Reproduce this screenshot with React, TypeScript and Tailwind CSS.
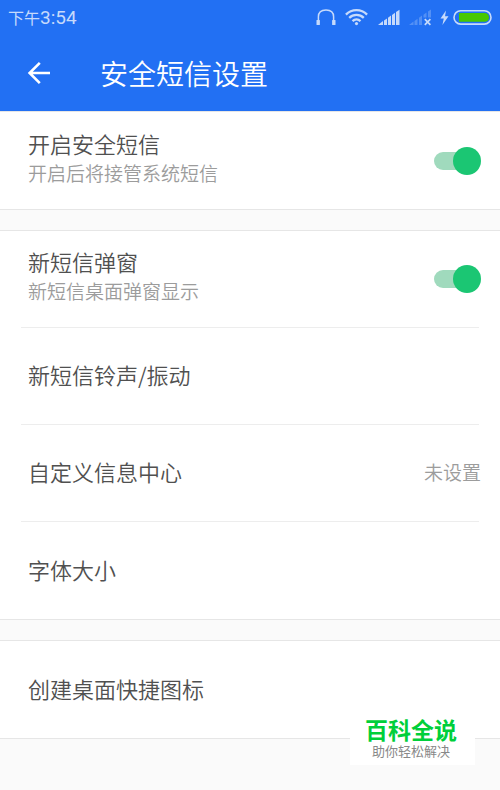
import { useState } from "react";
import type { ReactNode } from "react";

function StatusBar() {
  return (
    <div className="flex h-9 items-center justify-between pl-2 pr-[7px] text-[#c6dafb]">
      <div className="flex items-baseline pb-0.5 leading-5">
        <span className="text-[16px]">下午</span>
        <span className="font-[Roboto,sans-serif] text-[19px]">3:54</span>
      </div>
      <div className="flex items-center">
        <svg width="20" height="20" viewBox="0 0 20 20" fill="none" aria-hidden="true">
          <path d="M2.4 14V8.8C2.4 4.4 5 1.900 10 1.900s7.600 2.500 7.600 6.900V14" stroke="currentColor" strokeWidth="1.500" />
          <rect x="0.500" y="12" width="3.400" height="5" rx="0.500" fill="currentColor" />
          <rect x="16.100" y="12" width="3.400" height="5" rx="0.500" fill="currentColor" />
        </svg>
        <svg className="ml-[9px]" width="23" height="20" viewBox="0 0 23 20" fill="none" stroke="currentColor" strokeWidth="2.300" aria-hidden="true">
          <path d="M0.900 6.600C6.800 0.700 16.200 0.700 22.100 6.600" />
          <path d="M4.200 9.900C8.300 5.900 14.700 5.900 18.800 9.900" />
          <path d="M7.500 13.100C9.800 10.900 13.200 10.900 15.500 13.100" />
          <circle cx="11.500" cy="15.600" r="1.600" fill="currentColor" stroke="none" />
        </svg>
        <svg className="ml-[10px]" width="22" height="20" viewBox="0 0 22 20" fill="currentColor" aria-hidden="true">
          <path d="M0 17L5 13V17z" />
          <path d="M6 12.500L9 10.500V17H6z" />
          <path d="M10 9.800L13 7.500V17H10z" />
          <path d="M14 6.900L17 4.700V17H14z" />
          <path d="M18 4.100L21.500 1.700V17H18z" />
        </svg>
        <svg className="ml-[9px]" width="23" height="20" viewBox="0 0 23 20" fill="currentColor" aria-hidden="true">
          <g opacity="0.300">
            <path d="M0 17L4.500 13.500V17z" />
            <path d="M5.500 13L8.500 10.800V17H5.500z" />
            <path d="M10 9.800L13 7.500V17H10z" />
            <path d="M14.500 6.700L17.500 4.500V9.500H14.500z" />
            <path d="M19 3.500L22 1.500V9.500H19z" />
          </g>
          <path d="M15.800 11.200L21.400 16.800M21.400 11.200L15.800 16.800" stroke="currentColor" strokeWidth="1.700" />
        </svg>
        <svg className="ml-[8px]" width="9" height="20" viewBox="0 0 9 20" fill="currentColor" aria-hidden="true">
          <path d="M6 2.500L0.500 10.500H3.800L2.400 17L8.500 8.300H5z" />
        </svg>
        <svg className="ml-[4px]" width="40" height="20" viewBox="0 0 40 20" aria-hidden="true">
          <rect x="1" y="2.700" width="37" height="13.400" rx="6.700" fill="none" stroke="currentColor" strokeWidth="1.600" />
          <path d="M6 5.100H31.700a4.300 4.300 0 0 1 0 8.600H6z" fill="#48c800" />
        </svg>
      </div>
    </div>
  );
}

function Header() {
  return (
    <header className="bg-[#2270f3]">
      <StatusBar />
      <div className="flex h-[75px] items-center pb-px pl-[27px] text-white">
        <button type="button" aria-label="返回" className="flex">
          <svg width="24" height="24" viewBox="0 0 24 24" fill="none" stroke="currentColor" strokeWidth="2.600" aria-hidden="true">
            <path d="M23 12H2.500M12.800 1.800L2.600 12l10.200 10.200" />
          </svg>
        </button>
        <h1 className="ml-[49px] text-[28px] font-[350] leading-8">安全短信设置</h1>
      </div>
    </header>
  );
}

function Section({ children }: { children: ReactNode }) {
  return (
    <section className="divide-y divide-[#ededed] border-y border-[#e6e6e6] bg-white px-[21px]">
      {children}
    </section>
  );
}

function ToggleRow({ id, title, note }: { id: string; title: string; note: string }) {
  const [on, setOn] = useState(true);
  return (
    <div className="flex h-[97px] items-center justify-between pl-[7px]">
      <label htmlFor={id} className="block pb-[6px]">
        <span className="block text-[22px] font-[350] leading-[30px] text-[#505050]">{title}</span>
        <span className="block text-[19px] font-[350] leading-[30px] text-[#9c9c9c]">{note}</span>
      </label>
      <input
        id={id}
        type="checkbox"
        role="switch"
        checked={on}
        onChange={() => setOn(!on)}
        className="relative -mr-0.5 h-7 w-12 appearance-none before:absolute before:left-px before:top-[5px] before:h-[18px] before:w-10 before:rounded-full before:bg-[#ccc] before:content-[''] after:absolute after:left-0 after:top-0 after:size-7 after:rounded-full after:bg-[#f1f1f1] after:content-[''] checked:before:bg-[#a0dabd] checked:after:left-5 checked:after:bg-[#1bc673]"
      />
    </div>
  );
}

function LinkRow({ title, value }: { title: string; value?: string }) {
  return (
    <button type="button" className="flex h-[97px] w-full items-center pb-1 pl-[7px] text-left">
      <span className="flex grow items-center justify-between leading-[30px]">
        <span className="text-[22px] font-[350] text-[#505050]">{title}</span>
        {value && <span className="-mr-0.5 pt-0.5 text-[19px] font-[350] text-[#9c9c9c]">{value}</span>}
      </span>
    </button>
  );
}

function Watermark() {
  return (
    <aside className="absolute bottom-[25px] right-[25px] flex h-[50px] w-[125px] flex-col items-center bg-white pr-[3px]">
      <strong className="text-[23px] font-bold leading-7 text-[#00cf3a]">百科全说</strong>
      <span className="text-[13px] leading-4 text-[#888]">助你轻松解决</span>
    </aside>
  );
}

export default function App() {
  return (
    <div className="relative min-h-screen bg-[#fafafa] font-['Noto_Sans_CJK_SC',sans-serif]">
      <Header />
      <main className="flex flex-col gap-5">
        <Section>
          <ToggleRow id="secure-sms" title="开启安全短信" note="开启后将接管系统短信" />
        </Section>
        <Section>
          <ToggleRow id="popup" title="新短信弹窗" note="新短信桌面弹窗显示" />
          <LinkRow title="新短信铃声/振动" />
          <LinkRow title="自定义信息中心" value="未设置" />
          <LinkRow title="字体大小" />
        </Section>
        <Section>
          <LinkRow title="创建桌面快捷图标" />
        </Section>
      </main>
      <Watermark />
    </div>
  );
}
